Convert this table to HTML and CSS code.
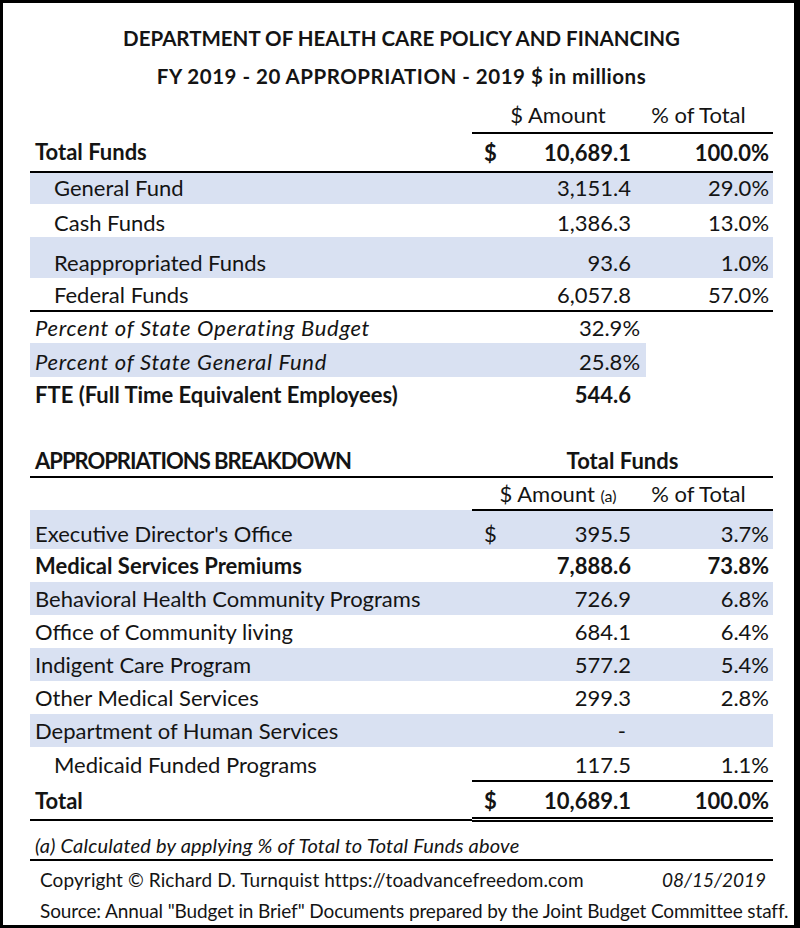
FILE: index.html
```html
<!DOCTYPE html>
<html>
<head>
<meta charset="utf-8">
<link rel="stylesheet" href="styles.css">
</head>
<body>
<div class="frame">
  <div class="title">
    <div class="title-line">DEPARTMENT OF HEALTH CARE POLICY AND FINANCING</div>
    <div class="title-line t2">FY 2019 - 20 APPROPRIATION - 2019 $ in millions</div>
  </div>
  <table class="sheet">
    <colgroup>
      <col class="c-label"><col class="c-dollar"><col class="c-amt"><col class="c-pct">
    </colgroup>
    <tr class="r-head">
      <td></td>
      <td colspan="2" class="h-amt ul">$ Amount</td>
      <td class="h-pct ul">% of Total</td>
    </tr>
    <tr class="r-total ul-all">
      <td class="lbl b">Total Funds</td>
      <td class="dol b">$</td>
      <td class="amt b">10,689.1</td>
      <td class="pct b">100.0%</td>
    </tr>
    <tr class="r-gf hl">
      <td class="lbl ind">General Fund</td><td></td>
      <td class="amt">3,151.4</td><td class="pct">29.0%</td>
    </tr>
    <tr class="r-cf">
      <td class="lbl ind">Cash Funds</td><td></td>
      <td class="amt">1,386.3</td><td class="pct">13.0%</td>
    </tr>
    <tr class="r-rf hl">
      <td class="lbl ind">Reappropriated Funds</td><td></td>
      <td class="amt">93.6</td><td class="pct">1.0%</td>
    </tr>
    <tr class="r-ff ul-all">
      <td class="lbl ind">Federal Funds</td><td></td>
      <td class="amt">6,057.8</td><td class="pct">57.0%</td>
    </tr>
    <tr class="r-po">
      <td class="lbl it">Percent of State Operating Budget</td><td></td>
      <td class="amt flush">32.9%</td><td></td>
    </tr>
    <tr class="r-pg">
      <td class="lbl it hlc">Percent of State General Fund</td><td class="hlc"></td>
      <td class="amt flush hlc">25.8%</td><td class="pad-hl"></td>
    </tr>
    <tr class="r-fte">
      <td class="lbl b">FTE (Full Time Equivalent Employees)</td><td></td>
      <td class="amt b">544.6</td><td></td>
    </tr>
    <tr class="r-gap"><td colspan="4"></td></tr>
    <tr class="r-sec ul-all">
      <td class="lbl b caps">APPROPRIATIONS BREAKDOWN</td>
      <td colspan="3" class="h-tf b">Total Funds</td>
    </tr>
    <tr class="r-head2">
      <td></td>
      <td colspan="2" class="h-amt ul">$ Amount <span class="small">(a)</span></td>
      <td class="h-pct ul">% of Total</td>
    </tr>
    <tr class="r-exec hl">
      <td class="lbl">Executive Director's Office</td>
      <td class="dol">$</td>
      <td class="amt">395.5</td><td class="pct">3.7%</td>
    </tr>
    <tr class="r-row">
      <td class="lbl b">Medical Services Premiums</td><td></td>
      <td class="amt b">7,888.6</td><td class="pct b">73.8%</td>
    </tr>
    <tr class="r-row hl">
      <td class="lbl">Behavioral Health Community Programs</td><td></td>
      <td class="amt">726.9</td><td class="pct">6.8%</td>
    </tr>
    <tr class="r-row">
      <td class="lbl">Office of Community living</td><td></td>
      <td class="amt">684.1</td><td class="pct">6.4%</td>
    </tr>
    <tr class="r-row hl">
      <td class="lbl">Indigent Care Program</td><td></td>
      <td class="amt">577.2</td><td class="pct">5.4%</td>
    </tr>
    <tr class="r-row">
      <td class="lbl">Other Medical Services</td><td></td>
      <td class="amt">299.3</td><td class="pct">2.8%</td>
    </tr>
    <tr class="r-row hl">
      <td class="lbl">Department of Human Services</td><td></td>
      <td class="amt dash">-</td><td class="pct"></td>
    </tr>
    <tr class="r-row r-last">
      <td class="lbl ind">Medicaid Funded Programs</td><td></td>
      <td class="amt">117.5</td><td class="pct">1.1%</td>
    </tr>
    <tr class="r-grand">
      <td class="lbl b">Total</td>
      <td class="dol b">$</td>
      <td class="amt b">10,689.1</td>
      <td class="pct b">100.0%</td>
    </tr>
    <tr class="r-note">
      <td colspan="4" class="note">(a) Calculated by applying % of Total to Total Funds above</td>
    </tr>
  </table>
  <div class="footer">
    <div class="foot-line copy">
      <span>Copyright © Richard D. Turnquist https://toadvancefreedom.com</span>
      <span class="date">08/15/2019</span>
    </div>
    <div class="foot-line source">Source: Annual "Budget in Brief" Documents prepared by the Joint Budget Committee staff.</div>
  </div>
</div>
</body>
</html>
```

FILE: styles.css
```css
html, body {
  margin: 0;
  padding: 0;
  background: #fff;
}

body {
  font-family: Lato, "Open Sans", sans-serif;
  color: #141414;
}

.frame {
  box-sizing: border-box;
  width: 800px;
  height: 928px;
  border-style: solid;
  border-color: #000;
  border-width: 3px 6px 3px 3px;
  padding: 16px 21px 0 27px;
  background: #fff;
}

.title {
  text-align: center;
  font-weight: 700;
  font-size: 20.5px;
}

.title-line {
  height: 38px;
  line-height: 38px;
}

.title-line.t2 {
  letter-spacing: 0.5px;
}

.sheet {
  width: 743px;
  border-collapse: collapse;
  table-layout: fixed;
  font-size: 22px;
}

.c-label { width: 442px; }
.c-dollar { width: 38px; }
.c-amt { width: 130px; }
.c-pct { width: 133px; }

.sheet td {
  padding: 0;
  white-space: nowrap;
  vertical-align: middle;
}

.b { font-weight: 700; }
.it { font-style: italic; letter-spacing: 0.7px; }
.caps { letter-spacing: -1px; }

.lbl { padding-left: 5px !important; }
.lbl.ind { padding-left: 24px !important; }

.dol { padding-left: 12px !important; }
.amt { text-align: right; padding-right: 9px !important; }
.amt.flush { padding-right: 0 !important; }
.amt.dash { text-align: right; padding-right: 14px !important; }
.pct { text-align: right; padding-right: 4px !important; }

.hl td { background: #d9e1f2; }
.hlc { background: #d9e1f2; }
.pad-hl {
  background: linear-gradient(to right, #d9e1f2 6px, transparent 6px);
}

.ul { border-bottom: 2px solid #000; }
.ul-all td { border-bottom: 2px solid #000; }

.h-amt { text-align: center; padding-left: 4px !important; }
.h-pct { text-align: center; padding-right: 16px !important; }
.h-tf { text-align: center; }

.small { font-size: 16px; }

.r-head td { height: 36px; padding-top: 1px; }
.r-total td { height: 36px; padding-top: 0; padding-bottom: 1px; }
.r-gf td { height: 29px; padding-bottom: 2px; }
.r-cf td { height: 30px; padding-top: 3px; }
.r-rf td { height: 39px; vertical-align: bottom; padding-bottom: 2px; }
.r-ff td { height: 32px; }
.r-po td { height: 31px; }
.r-pg td { height: 32px; padding-top: 2px; }
.r-fte td { height: 35px; }
.r-gap td { height: 33px; }
.r-sec td { height: 31px; }
.r-head2 td { height: 30px; padding-bottom: 1px; }
.r-exec td { height: 31px; padding-top: 7px; }
.r-row td { height: 33px; }
.r-last td { height: 32px; padding-top: 1px; }
.r-last td:nth-child(n+2) { border-bottom: 2px solid #000; }
.r-grand td { height: 34px; padding-top: 1px; }
.r-grand td:first-child { border-bottom: 2px solid #000; }
.r-grand td:nth-child(n+2) { border-bottom: 5px double #000; }
.r-note td { height: 29px; border-bottom: 2px solid #000; padding-top: 8px; }

.note {
  font-style: italic;
  font-size: 20px;
  letter-spacing: 0.2px;
  padding-left: 5px !important;
}

.footer {
  width: 760px;
  font-size: 19px;
  white-space: nowrap;
}

.foot-line {
  display: flex;
  align-items: center;
}

.copy {
  height: 35px;
  padding-top: 1px;
  padding-left: 10px;
  width: 726px;
  justify-content: space-between;
}

.copy span:first-child { letter-spacing: 0.1px; }

.date { font-style: italic; }

.source {
  height: 25px;
  padding-top: 1px;
  padding-left: 10px;
  letter-spacing: -0.12px;
}
```
